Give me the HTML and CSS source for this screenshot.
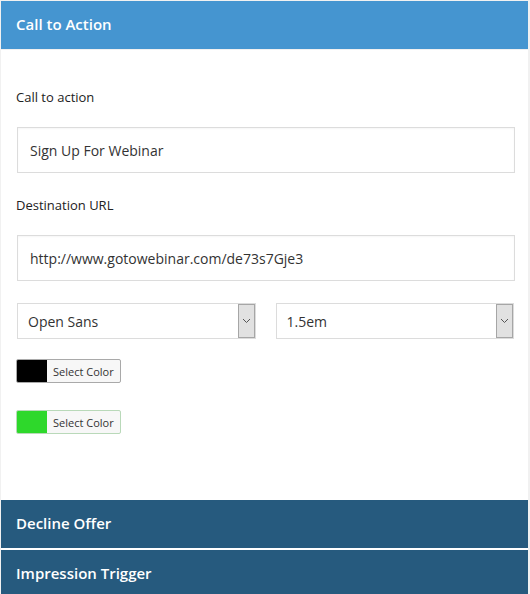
FILE: index.html
```html
<!DOCTYPE html>
<html>
<head>
<meta charset="utf-8">
<link rel="stylesheet" href="styles.css">
</head>
<body>
<div class="wrap">
  <div class="panel-head active">Call to Action</div>
  <div class="panel-body">
    <div class="field">
      <label class="lbl">Call to action</label>
      <div class="input">Sign Up For Webinar</div>
    </div>
    <div class="field last">
      <label class="lbl">Destination URL</label>
      <div class="input">http://www.gotowebinar.com/de73s7Gje3</div>
    </div>
    <div class="selects">
      <div class="select"><span class="sel-text">Open Sans</span><span class="sel-arrow"><svg width="9" height="6" viewBox="0 0 9 6"><path d="M1 1l3.5 3.5L8 1" fill="none" stroke="#555" stroke-width="1"/></svg></span></div>
      <div class="select"><span class="sel-text">1.5em</span><span class="sel-arrow"><svg width="9" height="6" viewBox="0 0 9 6"><path d="M1 1l3.5 3.5L8 1" fill="none" stroke="#555" stroke-width="1"/></svg></span></div>
    </div>
    <div class="picker"><span class="swatch black"></span><span class="pick-text">Select Color</span></div>
    <div class="picker second"><span class="swatch green"></span><span class="pick-text">Select Color</span></div>
  </div>
  <div class="panel-head dark gap">Decline Offer</div>
  <div class="panel-head dark">Impression Trigger</div>
</div>
</body>
</html>
```
FILE: styles.css
```css
html, body {
  margin: 0;
  padding: 0;
  background: #f1f1f1;
}
body {
  font-family: "Open Sans", "Liberation Sans", sans-serif;
  width: 530px;
  height: 594px;
  overflow: hidden;
}
.wrap {
  margin: 1px 2px 0 1px;
  background: #fff;
}
.panel-head {
  height: 48px;
  box-sizing: border-box;
  padding: 0 15px 2px;
  display: flex;
  align-items: center;
  color: #fff;
  font-size: 15px;
  font-weight: 600;
}
.panel-head.active {
  background: #4595d0;
  border-bottom: 1px solid #f0f0f0;
  height: 49px;
}
.panel-head.dark {
  background: #265a7e;
}
.panel-head.gap {
  border-bottom: 2px solid #fff;
  height: 50px;
}
.panel-body {
  height: 450px;
  box-sizing: border-box;
  padding: 38px 13px 0 15px;
  background: #fff;
}
.field {
  margin-bottom: 23px;
}
.field.last {
  margin-bottom: 22px;
}
.lbl {
  display: block;
  font-size: 13px;
  line-height: 18px;
  color: #222;
  margin-bottom: 21px;
}
.input {
  margin-left: 1px;
  height: 46px;
  box-sizing: border-box;
  border: 1px solid #dcdcdc;
  box-shadow: inset 0 1px 2px rgba(0,0,0,0.04);
  padding: 0 12px;
  display: flex;
  align-items: center;
  font-size: 14px;
  color: #333;
}
.selects {
  display: flex;
  gap: 20px;
  margin-left: 1px;
  margin-right: 1px;
}
.select {
  flex: 1;
  height: 36px;
  box-sizing: border-box;
  border: 1px solid #dcdcdc;
  display: flex;
  align-items: stretch;
  background: #fff;
}
.sel-text {
  flex: 1;
  display: flex;
  align-items: center;
  padding-left: 10px;
  font-size: 14px;
  color: #333;
}
.sel-arrow {
  width: 15px;
  background: #e1e1e1;
  border: 1px solid #a6a6a6;
  display: flex;
  align-items: center;
  justify-content: center;
}
.picker {
  margin-top: 20px;
  width: 105px;
  height: 24px;
  box-sizing: border-box;
  border: 1px solid #a9a9a9;
  border-radius: 2px;
  display: flex;
  overflow: hidden;
  background: #f7f7f7;
}
.picker.second {
  margin-top: 27px;
  border-color: #b9d9b9;
}
.swatch {
  width: 30px;
}
.swatch.black { background: #000; }
.swatch.green { background: #2ed82b; }
.pick-text {
  flex: 1;
  display: flex;
  align-items: center;
  padding-left: 6px;
  font-size: 11px;
  color: #333;
}
```
